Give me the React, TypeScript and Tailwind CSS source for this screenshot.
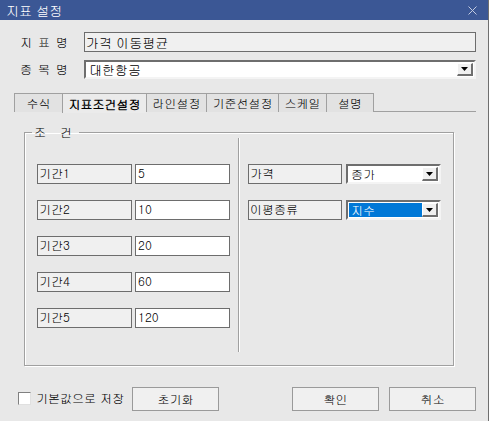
import React from 'react';

// 지표 설정 다이얼로그 (지표조건설정 탭)
const FONT = "font-['Gulim','Noto_Sans_CJK_KR',sans-serif]";

const Arrow = () => (
  <svg width="7" height="4" viewBox="0 0 7 4">
    <path d="M0 0h7L3.5 4z" fill="#000" />
  </svg>
);

interface ComboProps {
  value: string;
  className: string;
  selected?: boolean;
}

const Combo: React.FC<ComboProps> = ({ value, className, selected }) => (
  <div
    className={`flex bg-white border-t-2 border-l-2 border-t-[#6e6e6e] border-l-[#6e6e6e] border-b-2 border-r-2 border-b-[#f4f4f4] border-r-[#f4f4f4] ${className}`}
  >
    <div className="flex-1 flex items-stretch pl-[1px] py-[1px]">
      <span
        className={`flex-1 flex items-center pl-[2px] leading-none ${
          selected ? 'bg-[#0078d7] text-white' : ''
        }`}
      >
        {value}
      </span>
    </div>
    <div className="w-[16px] my-[1px] mr-[1px] bg-[#f0f0f0] border-t border-l border-t-white border-l-white border-b-2 border-r-2 border-b-[#6f6f6f] border-r-[#6f6f6f] flex items-center justify-center">
      <Arrow />
    </div>
  </div>
);

const LabelBox: React.FC<{ text: string; className: string }> = ({ text, className }) => (
  <div className={`h-[20px] border border-[#6d6d6d] bg-[#f0f0f0] pl-[1px] pt-[1px] leading-[14px] ${className}`}>
    {text}
  </div>
);

const InputBox: React.FC<{ text: string }> = ({ text }) => (
  <div className="w-[95px] h-[20px] border border-[#6d6d6d] bg-white pl-[2px] pt-[1px] leading-[14px]">
    {text}
  </div>
);

const Button: React.FC<{ text: string }> = ({ text }) => (
  <button
    type="button"
    className="w-[87px] h-[24px] border border-[#9a9a9a] bg-[#f0f0f0] flex items-center justify-center leading-none"
  >
    {text}
  </button>
);

const tabs = [
  { label: '수식', w: 'w-[48px]' },
  { label: '지표조건설정', w: 'w-[84px]', active: true },
  { label: '라인설정', w: 'w-[60px]' },
  { label: '기준선설정', w: 'w-[72px]' },
  { label: '스케일', w: 'w-[48px]' },
  { label: '설명', w: 'w-[48px]', last: true },
];

const periods = [
  { label: '기간1', value: '5' },
  { label: '기간2', value: '10' },
  { label: '기간3', value: '20' },
  { label: '기간4', value: '60' },
  { label: '기간5', value: '120' },
];

export default function App() {
  return (
    <div className={`w-[489px] h-[421px] bg-[#e8e8e8] border-r border-[#6f6f6f] flex flex-col text-[12px] text-black ${FONT}`}>
      {/* 타이틀 바 */}
      <div className="h-[20px] bg-[#3b5795] flex items-center justify-between pl-[6px] pr-[11px] text-white text-[13px] leading-none">
        <span>지표 설정</span>
        <svg width="9" height="9" viewBox="0 0 9 9">
          <path d="M0.5 0.5l8 8M8.5 0.5l-8 8" stroke="#c3cbe0" strokeWidth="1" />
        </svg>
      </div>

      <div className="flex flex-col pl-[14px]">
        {/* 지표명 */}
        <div className="flex items-center mt-[12px] h-[20px]">
          <span className="w-[70px] pl-[6px] tracking-[1px]">지 표 명</span>
          <div className="w-[392px] h-[20px] border border-[#6d6d6d] bg-[#f0f0f0] pl-[1px] flex items-center leading-none text-[13px]">
            가격 이동평균
          </div>
        </div>

        {/* 종목명 */}
        <div className="flex items-center mt-[8px] h-[18px]">
          <span className="w-[70px] pl-[6px] tracking-[1px]">종 목 명</span>
          <Combo value="대한항공" className="w-[392px] h-[19px] text-[13px]" />
        </div>

        {/* 탭 */}
        <div className="flex mt-[15px] w-[462px] h-[19px] border-b border-[#a0a0a0]">
          {tabs.map(t => (
            <div
              key={t.label}
              className={`${t.w} h-[19px] border-t border-l border-[#a0a0a0] flex items-center justify-center leading-none ${
                t.last ? 'border-r' : ''
              } ${t.active ? 'bg-[#ebebeb] font-bold h-[20px]' : 'bg-[#e2e2e2]'}`}
            >
              {t.label}
            </div>
          ))}
        </div>

        {/* 조건 그룹 */}
        <fieldset className="ml-[10px] mt-[12px] w-[430px] h-[242px] border border-[#a0a0a0] shadow-[inset_1px_1px_0_#ffffff,1px_1px_0_#ffffff] flex">
          <legend className="ml-[7px] px-[2px] leading-[16px] tracking-[5px]">조 건</legend>
          <div className="flex">
            <div className="flex flex-col gap-[16px] pl-[12px] pt-[24px]">
              {periods.map(p => (
                <div key={p.label} className="flex gap-[3px]">
                  <LabelBox text={p.label} className="w-[95px]" />
                  <InputBox text={p.value} />
                </div>
              ))}
            </div>
            <div className="ml-[8px] -mt-[2px] w-[2px] h-[214px] border-l border-[#a0a0a0] border-r border-r-white" />
            <div className="flex flex-col gap-[16px] pl-[8px] pt-[24px]">
              <div className="flex gap-[4px]">
                <LabelBox text="가격" className="w-[94px]" />
                <Combo value="종가" className="w-[95px] h-[20px]" />
              </div>
              <div className="flex gap-[4px]">
                <LabelBox text="이평종류" className="w-[94px]" />
                <Combo value="지수" className="w-[95px] h-[20px]" selected />
              </div>
            </div>
          </div>
        </fieldset>

        {/* 하단 */}
        <div className="flex items-center mt-[21px] h-[24px]">
          <div className="ml-[4px] w-[13px] h-[13px] bg-white border-t border-l border-[#808080] border-b border-r border-b-[#e0e0e0] border-r-[#e0e0e0] mb-[2px]" />
          <span className="ml-[5px] leading-none mb-[2px]">기본값으로 저장</span>
          <div className="ml-[8px]">
            <Button text="초기화" />
          </div>
          <div className="ml-[73px]">
            <Button text="확인" />
          </div>
          <div className="ml-[10px]">
            <Button text="취소" />
          </div>
        </div>
      </div>
    </div>
  );
}
